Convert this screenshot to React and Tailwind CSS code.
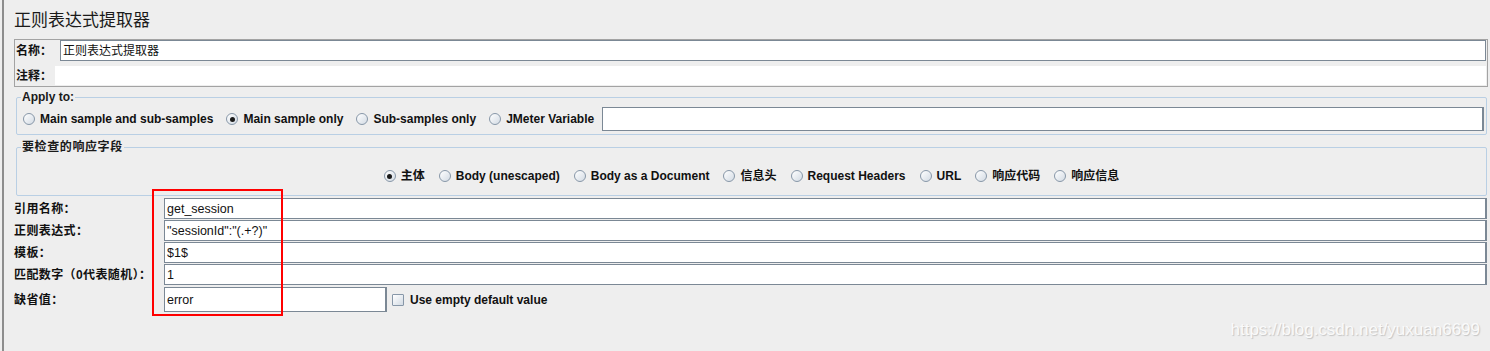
import React from "react";

function Radio({ checked }) {
  return (
    <span className="flex items-center justify-center w-[12px] h-[12px] shrink-0 rounded-full border border-[#8797a8] bg-linear-to-br from-white to-[#d3dbe4]">
      {checked && <span className="block w-[5px] h-[5px] rounded-full bg-[#1a1a1a]" />}
    </span>
  );
}

function RadioItem({ checked, children }) {
  return (
    <span className="flex items-center gap-[5px] whitespace-nowrap">
      <Radio checked={checked} />
      <span className="font-bold text-[12px] leading-[14px] text-[#111]">{children}</span>
    </span>
  );
}

function Field({ children, className = "" }) {
  return (
    <div
      className={
        "bg-white border border-[#7b8895] border-r-2 flex items-center pl-[2px] text-[12.5px] leading-[14px] text-[#111] " +
        className
      }
    >
      {children}
    </div>
  );
}

function Row({ label, children, className = "h-[22px]" }) {
  return (
    <div className={"flex " + className}>
      <div className="w-[150px] shrink-0 flex items-center font-bold text-[12px] leading-[14px] tracking-[0.4px] text-[#111] whitespace-nowrap">
        {label}
      </div>
      <div className="flex-1 flex items-start mr-[1px]">{children}</div>
    </div>
  );
}

export default function App() {
  return (
    <div className="relative w-[1490px] h-[351px] bg-[#eeeeee] overflow-hidden font-['Liberation_Sans','Noto_Sans_CJK_SC',sans-serif]">
      <div className="ml-[2px] w-[1488px] h-full border-l-2 border-[#8d8d8d] pl-[10px] pr-[2px] flex flex-col">
        {/* Title */}
        <div className="h-[39px] pt-[11px] shrink-0">
          <div className="text-[17px] leading-[20px] text-[#1a1a1a]">正则表达式提取器</div>
        </div>

        {/* Name / comment box */}
        <div className="h-[48px] border border-[#a3a3a3] flex flex-col shrink-0">
          <div className="flex h-[22px]">
            <div className="w-[45px] pl-[1px] flex items-center font-bold text-[12px] leading-[14px] text-[#111]">
              名称：
            </div>
            <div className="flex-1 h-[21px] mr-[1px] bg-white border border-[#7b8895] flex items-center pl-[2px] text-[12px] leading-[14px] text-[#111]">
              正则表达式提取器
            </div>
          </div>
          <div className="flex h-[24px] pt-[4px]">
            <div className="w-[40px] pl-[1px] h-[19px] flex items-center font-bold text-[12px] leading-[14px] text-[#111]">
              注释：
            </div>
            <div className="flex-1 h-[19px] mr-[1px] bg-white" />
          </div>
        </div>

        {/* Apply to */}
        <fieldset className="mt-[3px] ml-[2px] mr-[1px] border border-[#b9cfe4] rounded-[2px] shrink-0">
          <legend className="ml-[4px] px-[1px] font-bold text-[12px] leading-[14px] text-[#1a1a1a]">
            Apply to:
          </legend>
          <div className="flex items-center h-[24px] mt-[3px] mb-[3px] pl-[6px]">
            <div className="flex items-center gap-[13px]">
              <RadioItem>Main sample and sub-samples</RadioItem>
              <RadioItem checked>Main sample only</RadioItem>
              <RadioItem>Sub-samples only</RadioItem>
              <RadioItem>JMeter Variable</RadioItem>
            </div>
            <div className="flex-1 h-[24px] ml-[8px] mr-[2px] bg-white border border-[#7b8895] border-r-2" />
          </div>
        </fieldset>

        {/* Response field */}
        <fieldset className="mt-[5px] ml-[2px] mr-[1px] border border-[#b9cfe4] rounded-[2px] shrink-0">
          <legend className="ml-[4px] px-[1px] font-bold text-[12px] leading-[14px] tracking-[0.6px] text-[#1a1a1a]">
            要检查的响应字段
          </legend>
          <div className="flex items-center justify-center gap-[14px] h-[22px] mt-[11px] mb-[8px]">
            <RadioItem checked>主体</RadioItem>
            <RadioItem>Body (unescaped)</RadioItem>
            <RadioItem>Body as a Document</RadioItem>
            <RadioItem>信息头</RadioItem>
            <RadioItem>Request Headers</RadioItem>
            <RadioItem>URL</RadioItem>
            <RadioItem>响应代码</RadioItem>
            <RadioItem>响应信息</RadioItem>
          </div>
        </fieldset>

        {/* Rows */}
        <div className="mt-[2px] flex flex-col shrink-0">
          <Row label="引用名称：">
            <Field className="flex-1 h-[21px]">get_session</Field>
          </Row>
          <Row label="正则表达式：">
            <Field className="flex-1 h-[21px]">"sessionId":"(.+?)"</Field>
          </Row>
          <Row label="模板：">
            <Field className="flex-1 h-[21px] text-[#1f5a1f]">$1$</Field>
          </Row>
          <Row label="匹配数字（0代表随机）：">
            <Field className="flex-1 h-[21px]">1</Field>
          </Row>
          <Row label="缺省值：" className="h-[27px]">
            <div className="flex items-center mt-[1px] h-[25px]">
              <Field className="w-[223px] h-[25px]">error</Field>
              <span className="ml-[5px] w-[12px] h-[12px] border border-[#8797a8] rounded-[1px] bg-linear-to-br from-white to-[#d3dbe4]" />
              <span className="ml-[6px] font-bold text-[12px] leading-[14px] text-[#111] whitespace-nowrap">
                Use empty default value
              </span>
            </div>
          </Row>
        </div>
      </div>

      {/* Red annotation box */}
      <div className="absolute left-[152px] top-[189px] w-[131px] h-[127px] border-2 border-[#ff0000]" />

      {/* Watermark */}
      <div className="absolute right-[10px] top-[320px] text-[17px] leading-[20px] text-[#fafafa] [text-shadow:1px_1px_1px_#c4c4c4] font-['Liberation_Sans',sans-serif]">
        https://blog.csdn.net/yuxuan6699
      </div>
    </div>
  );
}
